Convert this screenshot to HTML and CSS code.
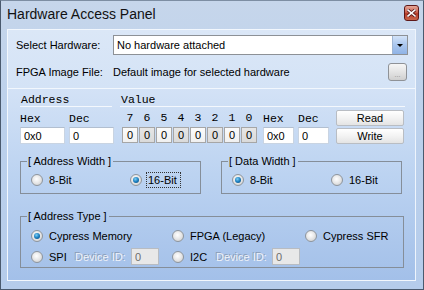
FILE: index.html
```html
<!DOCTYPE html>
<html>
  <head>
    <title>Hardware Access Panel</title>
    <meta charset="UTF-8" />
    <link rel="stylesheet" href="styles.css">
  </head>
  <body>
    <div class="window">

      <!-- Title bar -->
      <div class="titlebar">
        <span class="title">Hardware Access Panel</span>
        <button class="close" tabindex="-1">
          <svg width="9" height="8" viewBox="0 0 9 8">
            <path d="M1 1 L8 7 M8 1 L1 7" stroke="#5a1a1a" stroke-width="3.2" stroke-linecap="square"/>
            <path d="M1 1 L8 7 M8 1 L1 7" stroke="#fff" stroke-width="1.6" stroke-linecap="square"/>
          </svg>
        </button>
      </div>

      <div class="client">

        <!-- Hardware selection -->
        <div class="panel top">
          <div class="hwrow">
            <span class="lbl">Select Hardware:</span>
            <div class="combo">
              <span class="combo_text">No hardware attached</span>
              <span class="combo_btn"><span class="tri"></span></span>
            </div>
          </div>
          <div class="hwrow">
            <span class="lbl">FPGA Image File:</span>
            <span>Default image for selected hardware</span>
            <button class="browse" tabindex="-1">...</button>
          </div>
        </div>

        <!-- Read / write -->
        <div class="panel bottom">
          <div class="heads">
            <span class="head addr_head">Address</span>
            <span class="head value_head">Value</span>
          </div>

          <div class="rw">
            <span class="mono">Hex</span>
            <span class="mono">Dec</span>
            <div class="bits">
              <span>7</span><span>6</span><span>5</span><span>4</span><span>3</span><span>2</span><span>1</span><span>0</span>
            </div>
            <span class="mono">Hex</span>
            <span class="mono">Dec</span>
            <button class="btn read" tabindex="-1">Read</button>

            <input class="field wide" value="0x0">
            <input class="field wide" value="0">
            <div class="bits boxes">
              <span>0</span><span class="alt">0</span><span>0</span><span class="alt">0</span><span>0</span><span class="alt">0</span><span>0</span><span class="alt">0</span>
            </div>
            <input class="field narrow" value="0x0">
            <input class="field narrow" value="0">
            <button class="btn write" tabindex="-1">Write</button>
          </div>

          <div class="widths">
            <fieldset class="group">
              <legend>[ Address Width ]</legend>
              <div class="opts">
                <label class="opt"><span class="radio"></span>8-Bit</label>
                <label class="opt"><span class="radio on"></span><span class="focus">16-Bit</span></label>
              </div>
            </fieldset>
            <fieldset class="group">
              <legend>[ Data Width ]</legend>
              <div class="opts">
                <label class="opt"><span class="radio on"></span>8-Bit</label>
                <label class="opt"><span class="radio"></span>16-Bit</label>
              </div>
            </fieldset>
          </div>

          <fieldset class="group type">
            <legend>[ Address Type ]</legend>
            <div class="types">
              <label class="opt"><span class="radio on"></span>Cypress Memory</label>
              <label class="opt"><span class="radio"></span>FPGA (Legacy)</label>
              <label class="opt"><span class="radio"></span>Cypress SFR</label>
              <div class="dev">
                <label class="opt short"><span class="radio"></span>SPI</label>
                <span class="disabled">Device ID:</span>
                <input class="field off" value="0" disabled>
              </div>
              <div class="dev">
                <label class="opt short"><span class="radio"></span>I2C</label>
                <span class="disabled">Device ID:</span>
                <input class="field off" value="0" disabled>
              </div>
            </div>
          </fieldset>
        </div>

      </div>
    </div>
  </body>
</html>
```

FILE: styles.css
```css
body {
  margin: 0;
  font-family: "Liberation Sans", Arial, sans-serif;
  font-size: 11px;
  color: #000;
}

.window {
  width: 424px;
  height: 290px;
  box-sizing: border-box;
  border: 1px solid #4a5a6e;
  border-top-color: #7d8ea3;
  background: linear-gradient(#c6d6eb, #bcd1ec 40%, #b5cceb);
  display: flex;
  flex-direction: column;
  padding: 0 7px 8px 6px;
}

/* Title bar */
.titlebar {
  height: 28px;
  display: flex;
  align-items: flex-start;
  padding-top: 4px;
  box-sizing: border-box;
}
.title {
  font-size: 14px;
  margin-top: 1px;
  color: #111;
}
.close {
  margin-left: auto;
  margin-right: -3px;
  width: 15px;
  height: 16px;
  padding: 0;
  border: 1px solid #5e1818;
  border-radius: 3px;
  background: linear-gradient(#e6a89a, #c9604d 45%, #b23a28 55%, #c9654a);
  display: flex;
  align-items: center;
  justify-content: center;
}

/* Client area */
.client {
  flex: 1;
  display: flex;
  flex-direction: column;
}
.panel {
  border: 1px solid #f2f7fd;
  border-right-color: #eef4fc;
}
.panel.top {
  height: 60px;
  box-sizing: border-box;
  background: linear-gradient(#dbe7f7, #d4e3f6);
  padding: 5px 7px 0 8px;
  display: flex;
  flex-direction: column;
  gap: 7px;
}
.panel.bottom {
  flex: 1;
  border-top: none;
  background: linear-gradient(#d3e2f6, #bcd3f1 45%, #a3c0e9);
  padding: 0 10px 0 12px;
}

.hwrow {
  display: flex;
  align-items: center;
  height: 20px;
}
.lbl {
  width: 97px;
  flex: none;
}
.combo {
  flex: 1;
  height: 20px;
  box-sizing: border-box;
  border: 1px solid #8d9196;
  background: #fff;
  display: flex;
  align-items: center;
}
.combo_text {
  flex: 1;
  padding-left: 3px;
}
.combo_btn {
  width: 14px;
  height: 18px;
  background: linear-gradient(#d3e3f8, #a9c6ee 50%, #8fb3e6);
  border-left: 1px solid #9fb6d4;
  display: flex;
  align-items: center;
  justify-content: center;
}
.tri {
  width: 0;
  height: 0;
  border-left: 3px solid transparent;
  border-right: 3px solid transparent;
  border-top: 3px solid #000;
}
.browse {
  margin-left: auto;
  margin-right: 1px;
  width: 19px;
  height: 18px;
  padding: 6px 0 0;
  border: 1px solid #8f9297;
  border-radius: 3px;
  background: linear-gradient(#f6f6f6, #e4e4e4 50%, #cfcfcf);
  font-size: 7px;
  color: #8a8a8a;
  line-height: 8px;
}

/* Address / value rows */
.mono, .head, .bits span {
  font-family: "Liberation Mono", "Courier New", monospace;
  font-size: 11.5px;
}
.heads {
  display: flex;
  gap: 8px;
  padding-top: 5px;
}
.head {
  border-bottom: 1px solid #f4f8fd;
  line-height: 12px;
  padding-left: 1px;
}
.addr_head {
  width: 91px;
}
.value_head {
  flex: 1;
}

.rw {
  display: grid;
  grid-template-columns: 49px 53px 141px 35px 38px 68px;
  grid-template-rows: 17px 17px;
  margin-top: 3px;
}
.rw .mono {
  align-self: center;
}

.bits {
  display: flex;
  gap: 1px;
}
.bits span {
  width: 16px;
  text-align: center;
  line-height: 15px;
}
.boxes span {
  height: 16px;
  box-sizing: border-box;
  border: 1px solid #a6a6a6;
  background: linear-gradient(#fbfbfb, #f0f0f0);
  font-family: "Liberation Sans", Arial, sans-serif;
  font-size: 11px;
  line-height: 14px;
}
.boxes span.alt {
  background: linear-gradient(#e6e6e6, #dadada);
}

.field {
  height: 17px;
  box-sizing: border-box;
  margin: 0;
  border: 1px solid #c9d4e2;
  border-top-color: #b2bfd0;
  background: #fff;
  font: inherit;
  padding: 0 3px;
}
.field.wide {
  width: 45px;
}
.field.narrow {
  width: 31px;
}
.field.off {
  background: #e8e8e8;
  border-color: #b8bcc2;
  color: #6d6d6d;
}

.btn {
  font: inherit;
  height: 16px;
  padding: 0;
  border: 1px solid #b9bdc3;
  border-radius: 2px;
  background: linear-gradient(#ffffff, #f3f3f3 50%, #e4e4e4);
  color: #000;
}
.write {
  margin-top: 1px;
}

/* Group boxes */
.group {
  margin: 0;
  padding: 0 0 0 10px;
  border: 1px solid #858e99;
  min-width: 0;
  box-sizing: border-box;
}
.group legend {
  padding: 0 2px 0 1px;
  margin-left: -4px;
  line-height: 13px;
  font-size: 11px;
}
.widths {
  display: flex;
  gap: 20px;
  margin-top: 11px;
}
.widths .group {
  width: 181px;
  height: 39px;
}
.opts {
  display: flex;
  margin-top: 5px;
}
.opts .opt {
  width: 99px;
  flex: none;
}
.opt {
  display: flex;
  align-items: center;
  gap: 6px;
  height: 14px;
}
.radio {
  width: 12px;
  height: 12px;
  box-sizing: border-box;
  border-radius: 50%;
  border: 1px solid #8e959d;
  background: radial-gradient(circle at 45% 40%, #ffffff, #e9e9e9 45%, #c7c7c7);
  display: flex;
  align-items: center;
  justify-content: center;
  flex: none;
}
.radio.on::after {
  content: "";
  width: 6px;
  height: 6px;
  border-radius: 50%;
  background: radial-gradient(circle at 40% 35%, #7fd0f5, #1c7fc0 50%, #0a3f6f);
}
.focus {
  outline: 1px dotted #333;
  outline-offset: 1px;
  padding-right: 2px;
}

.group.type {
  width: 384px;
  height: 58px;
  margin-top: 16px;
}
.types {
  display: grid;
  grid-template-columns: 141px 133px auto;
  row-gap: 5px;
  margin-top: 6px;
}
.dev {
  display: flex;
  align-items: center;
}
.dev .short {
  width: 44px;
}
.disabled {
  width: 56px;
  color: #eef2f8;
  text-shadow: -1px -1px 0 rgba(110, 120, 135, 0.55);
}
.dev .field {
  width: 28px;
}
```
